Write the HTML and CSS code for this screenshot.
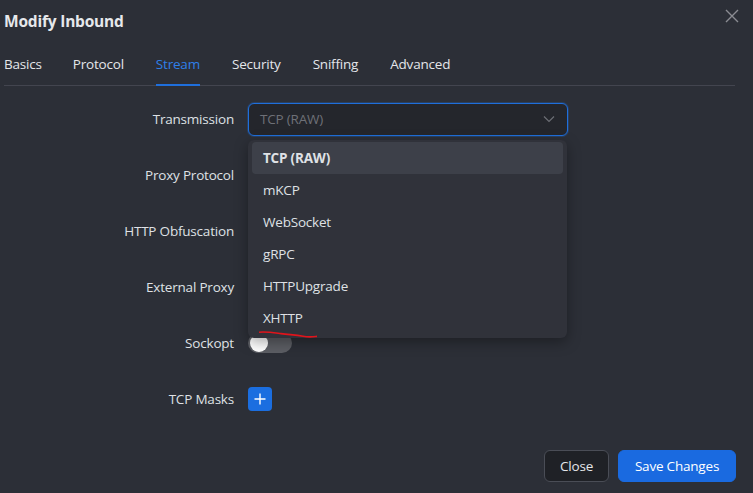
FILE: index.html
```html
<!DOCTYPE html>
<html lang="en">
<head>
<meta charset="utf-8">
<title>Modify Inbound</title>
<link rel="stylesheet" href="styles.css">
</head>
<body>
<div class="modal">
  <div class="modal-header">
    <h1 class="modal-title">Modify Inbound</h1>
    <button class="modal-close" aria-label="Close">
      <svg width="14" height="14" viewBox="0 0 14 14"><path d="M1 1L13 13M13 1L1 13" stroke="#8a8c92" stroke-width="1.4" fill="none"/></svg>
    </button>
  </div>
  <nav class="tabs">
    <span class="tab">Basics</span>
    <span class="tab">Protocol</span>
    <span class="tab active">Stream</span>
    <span class="tab">Security</span>
    <span class="tab">Sniffing</span>
    <span class="tab">Advanced</span>
  </nav>
  <form class="form">
    <div class="row">
      <label class="label">Transmission</label>
      <div class="control">
        <div class="select">
          <span class="select-value">TCP (RAW)</span>
          <svg class="select-arrow" width="12" height="8" viewBox="0 0 12 8"><path d="M1 1.5L6 6.5L11 1.5" stroke="#6c6e75" stroke-width="1.2" fill="none"/></svg>
        </div>
        <ul class="dropdown">
          <li class="option selected">TCP (RAW)</li>
          <li class="option">mKCP</li>
          <li class="option">WebSocket</li>
          <li class="option">gRPC</li>
          <li class="option">HTTPUpgrade</li>
          <li class="option">XHTTP
            <svg class="mark" width="60" height="8" viewBox="0 0 60 8"><path d="M0 1.2C8 0.6 14 1.6 22 2.6C30 3.8 36 3.6 44 5.2C50 6.4 54 5.8 58 5.4" stroke="#e0141b" stroke-width="1.6" fill="none"/></svg>
          </li>
        </ul>
      </div>
    </div>
    <div class="row"><label class="label">Proxy Protocol</label><div class="control"></div></div>
    <div class="row"><label class="label">HTTP Obfuscation</label><div class="control"></div></div>
    <div class="row"><label class="label">External Proxy</label><div class="control"></div></div>
    <div class="row">
      <label class="label">Sockopt</label>
      <div class="control"><span class="switch"><span class="knob"></span></span></div>
    </div>
    <div class="row">
      <label class="label">TCP Masks</label>
      <div class="control">
        <button type="button" class="add-btn" aria-label="Add">
          <svg width="12" height="12" viewBox="0 0 12 12"><path d="M6 0.5V11.5M0.5 6H11.5" stroke="#fff" stroke-width="1.4"/></svg>
        </button>
      </div>
    </div>
  </form>
  <div class="modal-footer">
    <button class="btn btn-default">Close</button>
    <button class="btn btn-primary">Save Changes</button>
  </div>
</div>
</body>
</html>
```

FILE: styles.css
```css
* { box-sizing: border-box; }

html, body {
  margin: 0;
  height: 100%;
  background: #2c2f37;
  font-family: "Open Sans", "Noto Sans", sans-serif;
  color: #dfe1e5;
}

.modal {
  width: 753px;
  height: 493px;
  display: flex;
  flex-direction: column;
}

.modal-header {
  height: 42px;
  display: flex;
  align-items: center;
  justify-content: space-between;
  padding: 0 14px 0 4px;
}

.modal-title {
  margin: 0;
  font-size: 15.5px;
  font-weight: 700;
  color: #e6e8eb;
  letter-spacing: -0.2px;
}

.modal-close {
  background: none;
  border: 0;
  padding: 0;
  margin-top: -11px;
  display: flex;
}

.tabs {
  margin: 0 18px 0 4px;
  height: 44px;
  display: flex;
  align-items: stretch;
  border-bottom: 1px solid #43454f;
}

.tab {
  font-size: 13.5px;
  color: #e4e6ea;
  display: flex;
  align-items: center;
  padding-top: 1px;
  padding-bottom: 1px;
  margin-right: 32px;
  letter-spacing: -0.2px;
  position: relative;
}

.tab:first-child {
  margin-right: 31px;
}

.tab.active {
  color: #2f7fe8;
}

.tab.active::after {
  content: "";
  position: absolute;
  left: 0;
  right: 0;
  bottom: -1px;
  height: 2px;
  background: #1f6fdc;
}

.form {
  margin: 0;
  padding-top: 16px;
  display: flex;
  flex-direction: column;
}

.row {
  height: 56px;
  display: grid;
  grid-template-columns: 234px 320px;
  column-gap: 14px;
  align-items: start;
}

.label {
  text-align: right;
  font-size: 13.5px;
  color: #dfe1e5;
  line-height: 34px;
  letter-spacing: -0.2px;
}

.control {
  position: relative;
  height: 34px;
  display: flex;
  align-items: center;
}

.select {
  width: 320px;
  height: 33px;
  border: 1px solid #1f6fdc;
  border-radius: 6px;
  background: #24262c;
  display: flex;
  align-items: center;
  justify-content: space-between;
  padding: 0 12px 0 11px;
  box-shadow: 0 0 0 1px rgba(31, 111, 220, 0.25);
}

.select-value {
  font-size: 13.5px;
  color: #6e7077;
  letter-spacing: -0.2px;
}

.dropdown {
  position: absolute;
  top: 38px;
  left: 0;
  width: 319px;
  height: 198px;
  margin: 0;
  padding: 2px 4px;
  list-style: none;
  background: #30323a;
  border-radius: 6px;
  box-shadow: 0 4px 14px rgba(0, 0, 0, 0.35);
  z-index: 2;
}

.option {
  position: relative;
  height: 32px;
  line-height: 32px;
  padding: 0 11px;
  font-size: 13.5px;
  color: #dfe1e5;
  border-radius: 4px;
  letter-spacing: -0.2px;
}

.option.selected {
  background: #3d4049;
  font-weight: 700;
}

.mark {
  position: absolute;
  left: 7px;
  top: 29px;
}

.switch {
  width: 44px;
  height: 20px;
  border-radius: 10px;
  background: #5c5e64;
  position: relative;
}

.knob {
  position: absolute;
  left: 2px;
  top: 1px;
  width: 18px;
  height: 18px;
  border-radius: 50%;
  background: #ffffff;
}

.add-btn {
  width: 24px;
  height: 24px;
  border: 0;
  border-radius: 4px;
  background: #1b6ee0;
  display: flex;
  align-items: center;
  justify-content: center;
  padding: 0;
}

.modal-footer {
  margin-top: auto;
  display: flex;
  justify-content: flex-end;
  gap: 9px;
  padding: 0 17px 11px 0;
}

.btn {
  height: 32px;
  border-radius: 6px;
  font-family: inherit;
  font-size: 13.5px;
  letter-spacing: -0.2px;
  padding: 0;
}

.btn-default {
  background: #1f2126;
  color: #e4e6ea;
  border: 1px solid #4a4d56;
  width: 65px;
}

.btn-primary {
  background: #1a6ae0;
  color: #ffffff;
  border: 1px solid #1a6ae0;
  width: 118px;
}
```
